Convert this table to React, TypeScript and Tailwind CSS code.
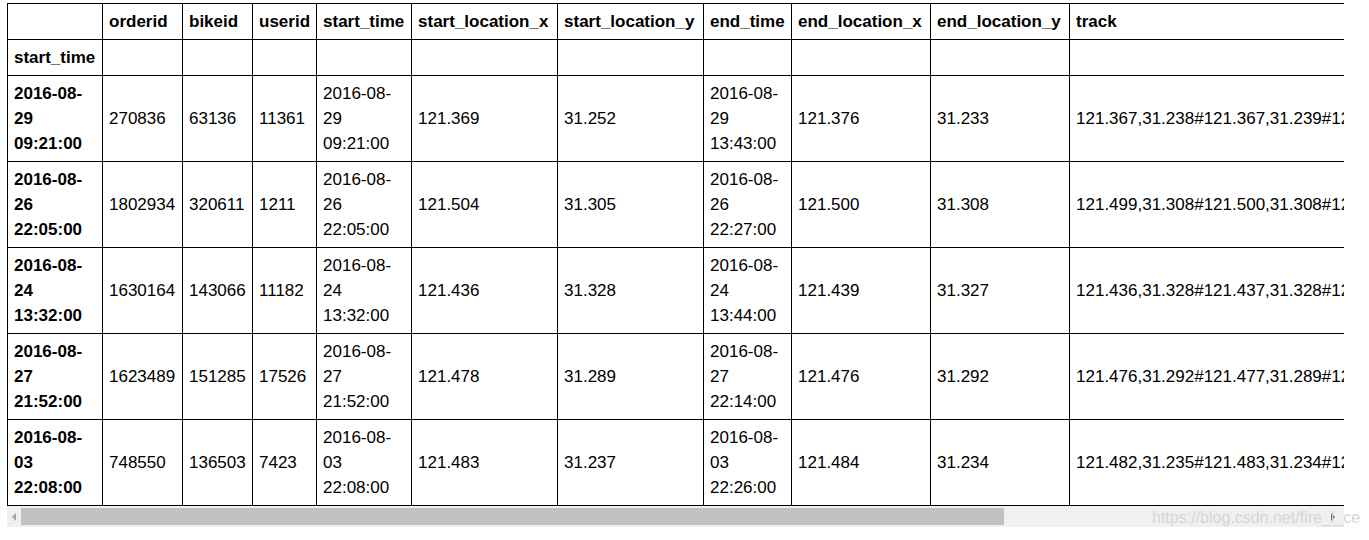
import React from 'react';

interface Row {
  index: string;
  orderid: string;
  bikeid: string;
  userid: string;
  startTime: string;
  startX: string;
  startY: string;
  endTime: string;
  endX: string;
  endY: string;
  track: string;
}

// header label + column width as laid out in the notebook
const columns: { name: string; w: string }[] = [
  { name: 'orderid', w: 'w-[80px]' },
  { name: 'bikeid', w: 'w-[70px]' },
  { name: 'userid', w: 'w-[64px]' },
  { name: 'start_time', w: 'w-[95px]' },
  { name: 'start_location_x', w: 'w-[146px]' },
  { name: 'start_location_y', w: 'w-[146px]' },
  { name: 'end_time', w: 'w-[88px]' },
  { name: 'end_location_x', w: 'w-[139px]' },
  { name: 'end_location_y', w: 'w-[139px]' },
  { name: 'track', w: '' },
];

const rows: Row[] = [
  {
    index: '2016-08-29 09:21:00',
    orderid: '270836',
    bikeid: '63136',
    userid: '11361',
    startTime: '2016-08-29 09:21:00',
    startX: '121.369',
    startY: '31.252',
    endTime: '2016-08-29 13:43:00',
    endX: '121.376',
    endY: '31.233',
    track: '121.367,31.238#121.367,31.239#121.368,31.240#121.369,31.241#121.370,31.242#121...',
  },
  {
    index: '2016-08-26 22:05:00',
    orderid: '1802934',
    bikeid: '320611',
    userid: '1211',
    startTime: '2016-08-26 22:05:00',
    startX: '121.504',
    startY: '31.305',
    endTime: '2016-08-26 22:27:00',
    endX: '121.500',
    endY: '31.308',
    track: '121.499,31.308#121.500,31.308#121.501,31.307#121.502,31.306#121.503,31.305#121...',
  },
  {
    index: '2016-08-24 13:32:00',
    orderid: '1630164',
    bikeid: '143066',
    userid: '11182',
    startTime: '2016-08-24 13:32:00',
    startX: '121.436',
    startY: '31.328',
    endTime: '2016-08-24 13:44:00',
    endX: '121.439',
    endY: '31.327',
    track: '121.436,31.328#121.437,31.328#121.438,31.327#121.439,31.327#121.439,31.326#121...',
  },
  {
    index: '2016-08-27 21:52:00',
    orderid: '1623489',
    bikeid: '151285',
    userid: '17526',
    startTime: '2016-08-27 21:52:00',
    startX: '121.478',
    startY: '31.289',
    endTime: '2016-08-27 22:14:00',
    endX: '121.476',
    endY: '31.292',
    track: '121.476,31.292#121.477,31.289#121.478,31.290#121.477,31.291#121.476,31.292#121...',
  },
  {
    index: '2016-08-03 22:08:00',
    orderid: '748550',
    bikeid: '136503',
    userid: '7423',
    startTime: '2016-08-03 22:08:00',
    startX: '121.483',
    startY: '31.237',
    endTime: '2016-08-03 22:26:00',
    endX: '121.484',
    endY: '31.234',
    track: '121.482,31.235#121.483,31.234#121.484,31.234#121.484,31.235#121.484,31.234#121...',
  },
];

const cell = 'border border-black px-[6px] py-[5px] leading-[25px] text-left align-middle whitespace-nowrap';

// "2016-08-29 09:21:00" wraps as 2016-08- / 29 / 09:21:00 in the notebook
function DateLines({ value }: { value: string }) {
  const [date, time] = value.split(' ');
  const head = date.slice(0, 8);
  const day = date.slice(8);
  return (
    <>
      {head}
      <br />
      {day}
      <br />
      {time}
    </>
  );
}

export default function App() {
  return (
    <div className="relative w-[1369px] h-[540px] bg-white overflow-hidden pt-[3px] pl-[7px] font-['Liberation_Sans',Arial,sans-serif] text-[17px] text-black">
      <div className="w-[1337px]">
        {/* DataFrame */}
        <div className="overflow-hidden">
          <table className="border-collapse w-max">
            <thead>
              <tr>
                <th className={`${cell} w-[95px]`}></th>
                {columns.map((c) => (
                  <th key={c.name} className={`${cell} ${c.w} font-bold`}>
                    {c.name}
                  </th>
                ))}
              </tr>
              <tr>
                <th className={`${cell} font-bold`}>start_time</th>
                {columns.map((c) => (
                  <th key={c.name} className={cell}></th>
                ))}
              </tr>
            </thead>
            <tbody>
              {rows.map((r) => (
                <tr key={r.orderid}>
                  <th className={`${cell} font-bold`}>
                    <DateLines value={r.index} />
                  </th>
                  <td className={cell}>{r.orderid}</td>
                  <td className={cell}>{r.bikeid}</td>
                  <td className={cell}>{r.userid}</td>
                  <td className={cell}>
                    <DateLines value={r.startTime} />
                  </td>
                  <td className={cell}>{r.startX}</td>
                  <td className={cell}>{r.startY}</td>
                  <td className={cell}>
                    <DateLines value={r.endTime} />
                  </td>
                  <td className={cell}>{r.endX}</td>
                  <td className={cell}>{r.endY}</td>
                  <td className={cell}>{r.track}</td>
                </tr>
              ))}
            </tbody>
          </table>
        </div>

        {/* Horizontal scrollbar */}
        <div className="flex items-center h-[21px] bg-[#f0f0f0]">
          <div className="w-[14px] h-full flex items-center justify-center">
            <svg width="4" height="8" viewBox="0 0 4 8">
              <path d="M4 0 L0 4 L4 8 Z" fill="#a3a3a3" />
            </svg>
          </div>
          <div className="w-[983px] h-[17px] bg-[#c1c1c1]" />
          <div className="flex-1" />
          <div className="w-[14px] h-full flex items-center justify-start pl-[1px]">
            <svg width="4" height="8" viewBox="0 0 4 8">
              <path d="M0 0 L4 4 L0 8 Z" fill="#505050" />
            </svg>
          </div>
        </div>
      </div>

      {/* Watermark */}
      <div className="absolute left-[1152px] top-[509px] text-[16px] leading-[18px] whitespace-nowrap text-[#d6d6d6] font-['Liberation_Sans',Arial,sans-serif]">
        https://blog.csdn.net/fire_l_ce
      </div>
    </div>
  );
}
